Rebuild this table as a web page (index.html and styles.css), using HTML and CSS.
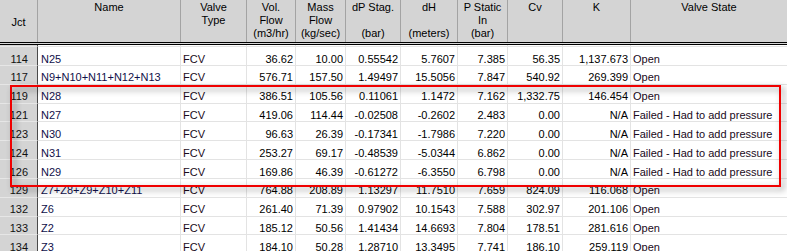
FILE: index.html
```html
<!DOCTYPE html>
<html>
  <head>
    <title>Valve Summary</title>
    <link rel="stylesheet" href="styles.css">
  </head>
  <body>
    <div class="view">
      <div class="grid">
        <div class="head">
          <div class="hc jct-h">Jct</div>
          <div class="hc">Name</div>
          <div class="hc">Valve<br>Type</div>
          <div class="hc">Vol.<br>Flow<br>(m3/hr)</div>
          <div class="hc">Mass<br>Flow<br>(kg/sec)</div>
          <div class="hc">dP Stag.<br><br>(bar)</div>
          <div class="hc">dH<br><br>(meters)</div>
          <div class="hc">P Static<br>In<br>(bar)</div>
          <div class="hc">Cv</div>
          <div class="hc">K</div>
          <div class="hc">Valve State</div>
        </div>

        <div class="row stub">
          <div class="c jct"></div><div class="c"></div><div class="c"></div><div class="c"></div><div class="c"></div><div class="c"></div><div class="c"></div><div class="c"></div><div class="c"></div><div class="c"></div><div class="c"></div>
        </div>

        <div class="row">
          <div class="c jct">114</div><div class="c name">N25</div><div class="c txt">FCV</div>
          <div class="c num">36.62</div><div class="c num">10.00</div><div class="c num">0.55542</div><div class="c num">5.7607</div><div class="c num">7.385</div><div class="c num">56.35</div><div class="c num">1,137.673</div><div class="c txt">Open</div>
        </div>
        <div class="row">
          <div class="c jct">117</div><div class="c name">N9+N10+N11+N12+N13</div><div class="c txt">FCV</div>
          <div class="c num">576.71</div><div class="c num">157.50</div><div class="c num">1.49497</div><div class="c num">15.5056</div><div class="c num">7.847</div><div class="c num">540.92</div><div class="c num">269.399</div><div class="c txt">Open</div>
        </div>
        <div class="row">
          <div class="c jct">119</div><div class="c name">N28</div><div class="c txt">FCV</div>
          <div class="c num">386.51</div><div class="c num">105.56</div><div class="c num">0.11061</div><div class="c num">1.1472</div><div class="c num">7.162</div><div class="c num">1,332.75</div><div class="c num">146.454</div><div class="c txt">Open</div>
        </div>
        <div class="row">
          <div class="c jct">121</div><div class="c name">N27</div><div class="c txt">FCV</div>
          <div class="c num">419.06</div><div class="c num">114.44</div><div class="c num">-0.02508</div><div class="c num">-0.2602</div><div class="c num">2.483</div><div class="c num">0.00</div><div class="c num">N/A</div><div class="c txt">Failed - Had to add pressure</div>
        </div>
        <div class="row">
          <div class="c jct">123</div><div class="c name">N30</div><div class="c txt">FCV</div>
          <div class="c num">96.63</div><div class="c num">26.39</div><div class="c num">-0.17341</div><div class="c num">-1.7986</div><div class="c num">7.220</div><div class="c num">0.00</div><div class="c num">N/A</div><div class="c txt">Failed - Had to add pressure</div>
        </div>
        <div class="row">
          <div class="c jct">124</div><div class="c name">N31</div><div class="c txt">FCV</div>
          <div class="c num">253.27</div><div class="c num">69.17</div><div class="c num">-0.48539</div><div class="c num">-5.0344</div><div class="c num">6.862</div><div class="c num">0.00</div><div class="c num">N/A</div><div class="c txt">Failed - Had to add pressure</div>
        </div>
        <div class="row">
          <div class="c jct">126</div><div class="c name">N29</div><div class="c txt">FCV</div>
          <div class="c num">169.86</div><div class="c num">46.39</div><div class="c num">-0.61272</div><div class="c num">-6.3550</div><div class="c num">6.798</div><div class="c num">0.00</div><div class="c num">N/A</div><div class="c txt">Failed - Had to add pressure</div>
        </div>
        <div class="row">
          <div class="c jct">129</div><div class="c name">Z7+Z8+Z9+Z10+Z11</div><div class="c txt">FCV</div>
          <div class="c num">764.88</div><div class="c num">208.89</div><div class="c num">1.13297</div><div class="c num">11.7510</div><div class="c num">7.659</div><div class="c num">824.09</div><div class="c num">116.068</div><div class="c txt">Open</div>
        </div>
        <div class="row">
          <div class="c jct">132</div><div class="c name">Z6</div><div class="c txt">FCV</div>
          <div class="c num">261.40</div><div class="c num">71.39</div><div class="c num">0.97902</div><div class="c num">10.1543</div><div class="c num">7.588</div><div class="c num">302.97</div><div class="c num">201.106</div><div class="c txt">Open</div>
        </div>
        <div class="row">
          <div class="c jct">133</div><div class="c name">Z2</div><div class="c txt">FCV</div>
          <div class="c num">185.12</div><div class="c num">50.56</div><div class="c num">1.41434</div><div class="c num">14.6693</div><div class="c num">7.804</div><div class="c num">178.51</div><div class="c num">281.616</div><div class="c txt">Open</div>
        </div>
        <div class="row">
          <div class="c jct">134</div><div class="c name">Z3</div><div class="c txt">FCV</div>
          <div class="c num">184.10</div><div class="c num">50.28</div><div class="c num">1.28710</div><div class="c num">13.3495</div><div class="c num">7.741</div><div class="c num">186.10</div><div class="c num">259.119</div><div class="c txt">Open</div>
        </div>
      </div>

      <!-- red callout drawn over the failed valves -->
      <div class="callout"></div>
    </div>
  </body>
</html>
```

FILE: styles.css
```css
body {
  margin: 0;
  background: #ffffff;
  font-family: "Liberation Sans", Arial, sans-serif;
  font-size: 11px;
  color: #000;
}

.view {
  position: relative;
  width: 787px;
  height: 251px;
  overflow: hidden;
}

.head,
.row {
  display: grid;
  grid-template-columns: 38px 143px 66px 49px 50px 55px 57px 50px 55px 68px 156px;
}

.head {
  height: 45px;
  box-sizing: border-box;
  background: #d4d4d4;
  border-bottom: 3px double #000;
}
.hc {
  border-right: 1px solid #a3a3a3;
  text-align: center;
  padding-top: 1px;
  line-height: 13px;
  white-space: nowrap;
}
.hc:last-child {
  border-right: none;
}
.hc.jct-h {
  padding-top: 16px;
}

.row {
  height: 18.85px;
  box-sizing: border-box;
}
.row.stub {
  height: 2px;
}
.c {
  box-sizing: border-box;
  border-right: 1px solid #e3e3e3;
  border-bottom: 1px solid #e3e3e3;
  padding: 5.5px 2px 0 2px;
  line-height: 13px;
  white-space: nowrap;
  overflow: hidden;
}
.c:last-child {
  border-right: none;
}
.c.jct {
  background: #d4d4d4;
  border-right: 1px solid #4a4a4a;
  border-bottom-color: #e6e6e6;
  text-align: right;
  padding-right: 9px;
  color: #111;
}
.row.stub .c {
  padding: 0;
}
.c.name {
  padding-left: 3px;
  color: #10104a;
}
.c.txt {
  color: #1a0a1a;
}
.c.num {
  text-align: right;
}

.callout {
  position: absolute;
  left: 10px;
  top: 85px;
  width: 771px;
  height: 102px;
  box-sizing: border-box;
  border: 2px solid #f00000;
  filter: drop-shadow(3px 3px 3px rgba(0, 0, 0, 0.45));
}
```
